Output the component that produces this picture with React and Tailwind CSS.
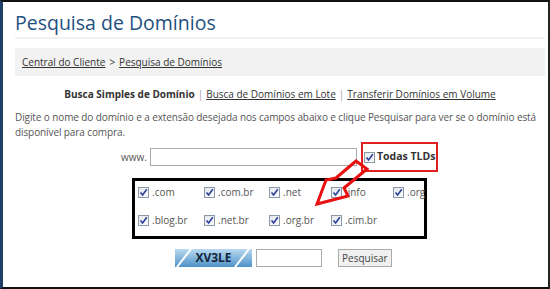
import React from "react";

const font = { fontFamily: '"Open Sans", "DejaVu Sans", sans-serif' };

function Check() {
  return (
    <span className="inline-flex h-[11px] w-[11px] shrink-0 items-center justify-center border border-[#8c9aa8] bg-gradient-to-br from-[#e4e8ec] to-[#fbfcfd]">
      <svg width="9" height="9" viewBox="0 0 9 9">
        <path d="M1.5 4.5 L3.6 7 L7.8 1.2" fill="none" stroke="#2b3f9a" strokeWidth="1.6" />
      </svg>
    </span>
  );
}

const tlds = [".com", ".com.br", ".net", ".info", ".org", ".blog.br", ".net.br", ".org.br", ".cim.br"];

export default function App() {
  return (
    <div
      className="relative h-[289px] w-[550px] overflow-hidden border-t-2 border-r-2 border-b-2 border-l-[3px] border-t-[#111] border-r-[#222] border-b-[#111] border-l-[#1f3f66] bg-white text-[#444]"
      style={font}
    >
      <div className="pl-[12px] pr-[3px]">
        <h1 className="pt-[8px] text-[19.5px] leading-[26px] text-[#1f5080]">Pesquisa de Domínios</h1>
        <div className="mt-[1px] h-[2px] bg-[#f1f1f1]" />
        <div className="mt-[9px] flex h-[28px] items-center bg-[#f2f2f2] pl-[7px] text-[10px] text-[#333]">
          <span className="underline">Central do Cliente</span>
          <span className="mx-[4px]">&gt;</span>
          <span className="underline">Pesquisa de Domínios</span>
        </div>

        <div className="mt-[11px] text-center text-[10px] leading-[14px] text-[#333]">
          <span className="font-bold">Busca Simples de Domínio</span>
          <span className="mx-[3px] text-[#999]">|</span>
          <span className="underline">Busca de Domínios em Lote</span>
          <span className="mx-[3px] text-[#999]">|</span>
          <span className="underline">Transferir Domínios em Volume</span>
        </div>

        <p className="mt-[9px] text-[10px] leading-[15px] tracking-[-0.1px] text-[#555]">
          Digite o nome do domínio e a extensão desejada nos campos abaixo e clique Pesquisar para ver se o domínio está disponível para compra.
        </p>

        <div className="mt-[2px] flex items-center">
          <span className="ml-[106px] w-[29px] text-[10px] text-[#555]">www.</span>
          <div className="h-[18px] w-[207px] border border-[#aaa] bg-white" />
          <div className="ml-[4px] flex h-[30px] w-[77px] items-center border-2 border-[#e02020] pl-[1px]">
            <Check />
            <span className="ml-[2px] whitespace-nowrap text-[10.5px] font-bold text-[#333]">Todas TLDs</span>
          </div>
        </div>

        <div className="ml-[117px] mt-[6px] grid h-[61px] w-[295px] grid-cols-[66px_65px_62px_62px_1fr] content-start gap-y-[14px] border-[3px] border-black pl-[3px] pt-[4px] text-[10px] text-[#555]">
          {tlds.map((t) => (
            <div key={t} className="flex h-[14px] items-center gap-[3px]">
              <Check />
              <span>{t}</span>
            </div>
          ))}
        </div>

        <div className="mt-[10px] flex items-center">
          <div className="relative ml-[160px] h-[18px] w-[77px]">
            <svg className="absolute inset-0" width="77" height="18" viewBox="0 0 77 18">
              <defs>
                <linearGradient id="cg" x1="0" y1="0" x2="0" y2="1">
                  <stop offset="0" stopColor="#b9d9ef" />
                  <stop offset="1" stopColor="#4f93c9" />
                </linearGradient>
              </defs>
              <rect width="77" height="18" fill="url(#cg)" />
              <path d="M2 18 L16 0" stroke="#fff" strokeWidth="2" />
              <path d="M60 18 L74 0" stroke="#fff" strokeWidth="2" />
            </svg>
            <span className="absolute inset-0 flex items-center justify-center text-[12px] font-bold text-[#13263d]">XV3LE</span>
          </div>
          <div className="ml-[4px] h-[18px] w-[66px] border border-[#aaa] bg-white" />
          <div className="ml-[16px] flex h-[18px] items-center border border-[#aaa] bg-[#f0f0f0] px-[3px] text-[10px] text-[#444]">
            Pesquisar
          </div>
        </div>
      </div>

      <svg className="pointer-events-none absolute left-0 top-0" width="550" height="289" viewBox="0 0 550 289">
        <polygon
          points="353,159 364,167 341,186 345,194 314,202 323,178 333,176"
          fill="none"
          stroke="#e81010"
          strokeWidth="3"
          strokeLinejoin="miter"
        />
      </svg>
    </div>
  );
}
